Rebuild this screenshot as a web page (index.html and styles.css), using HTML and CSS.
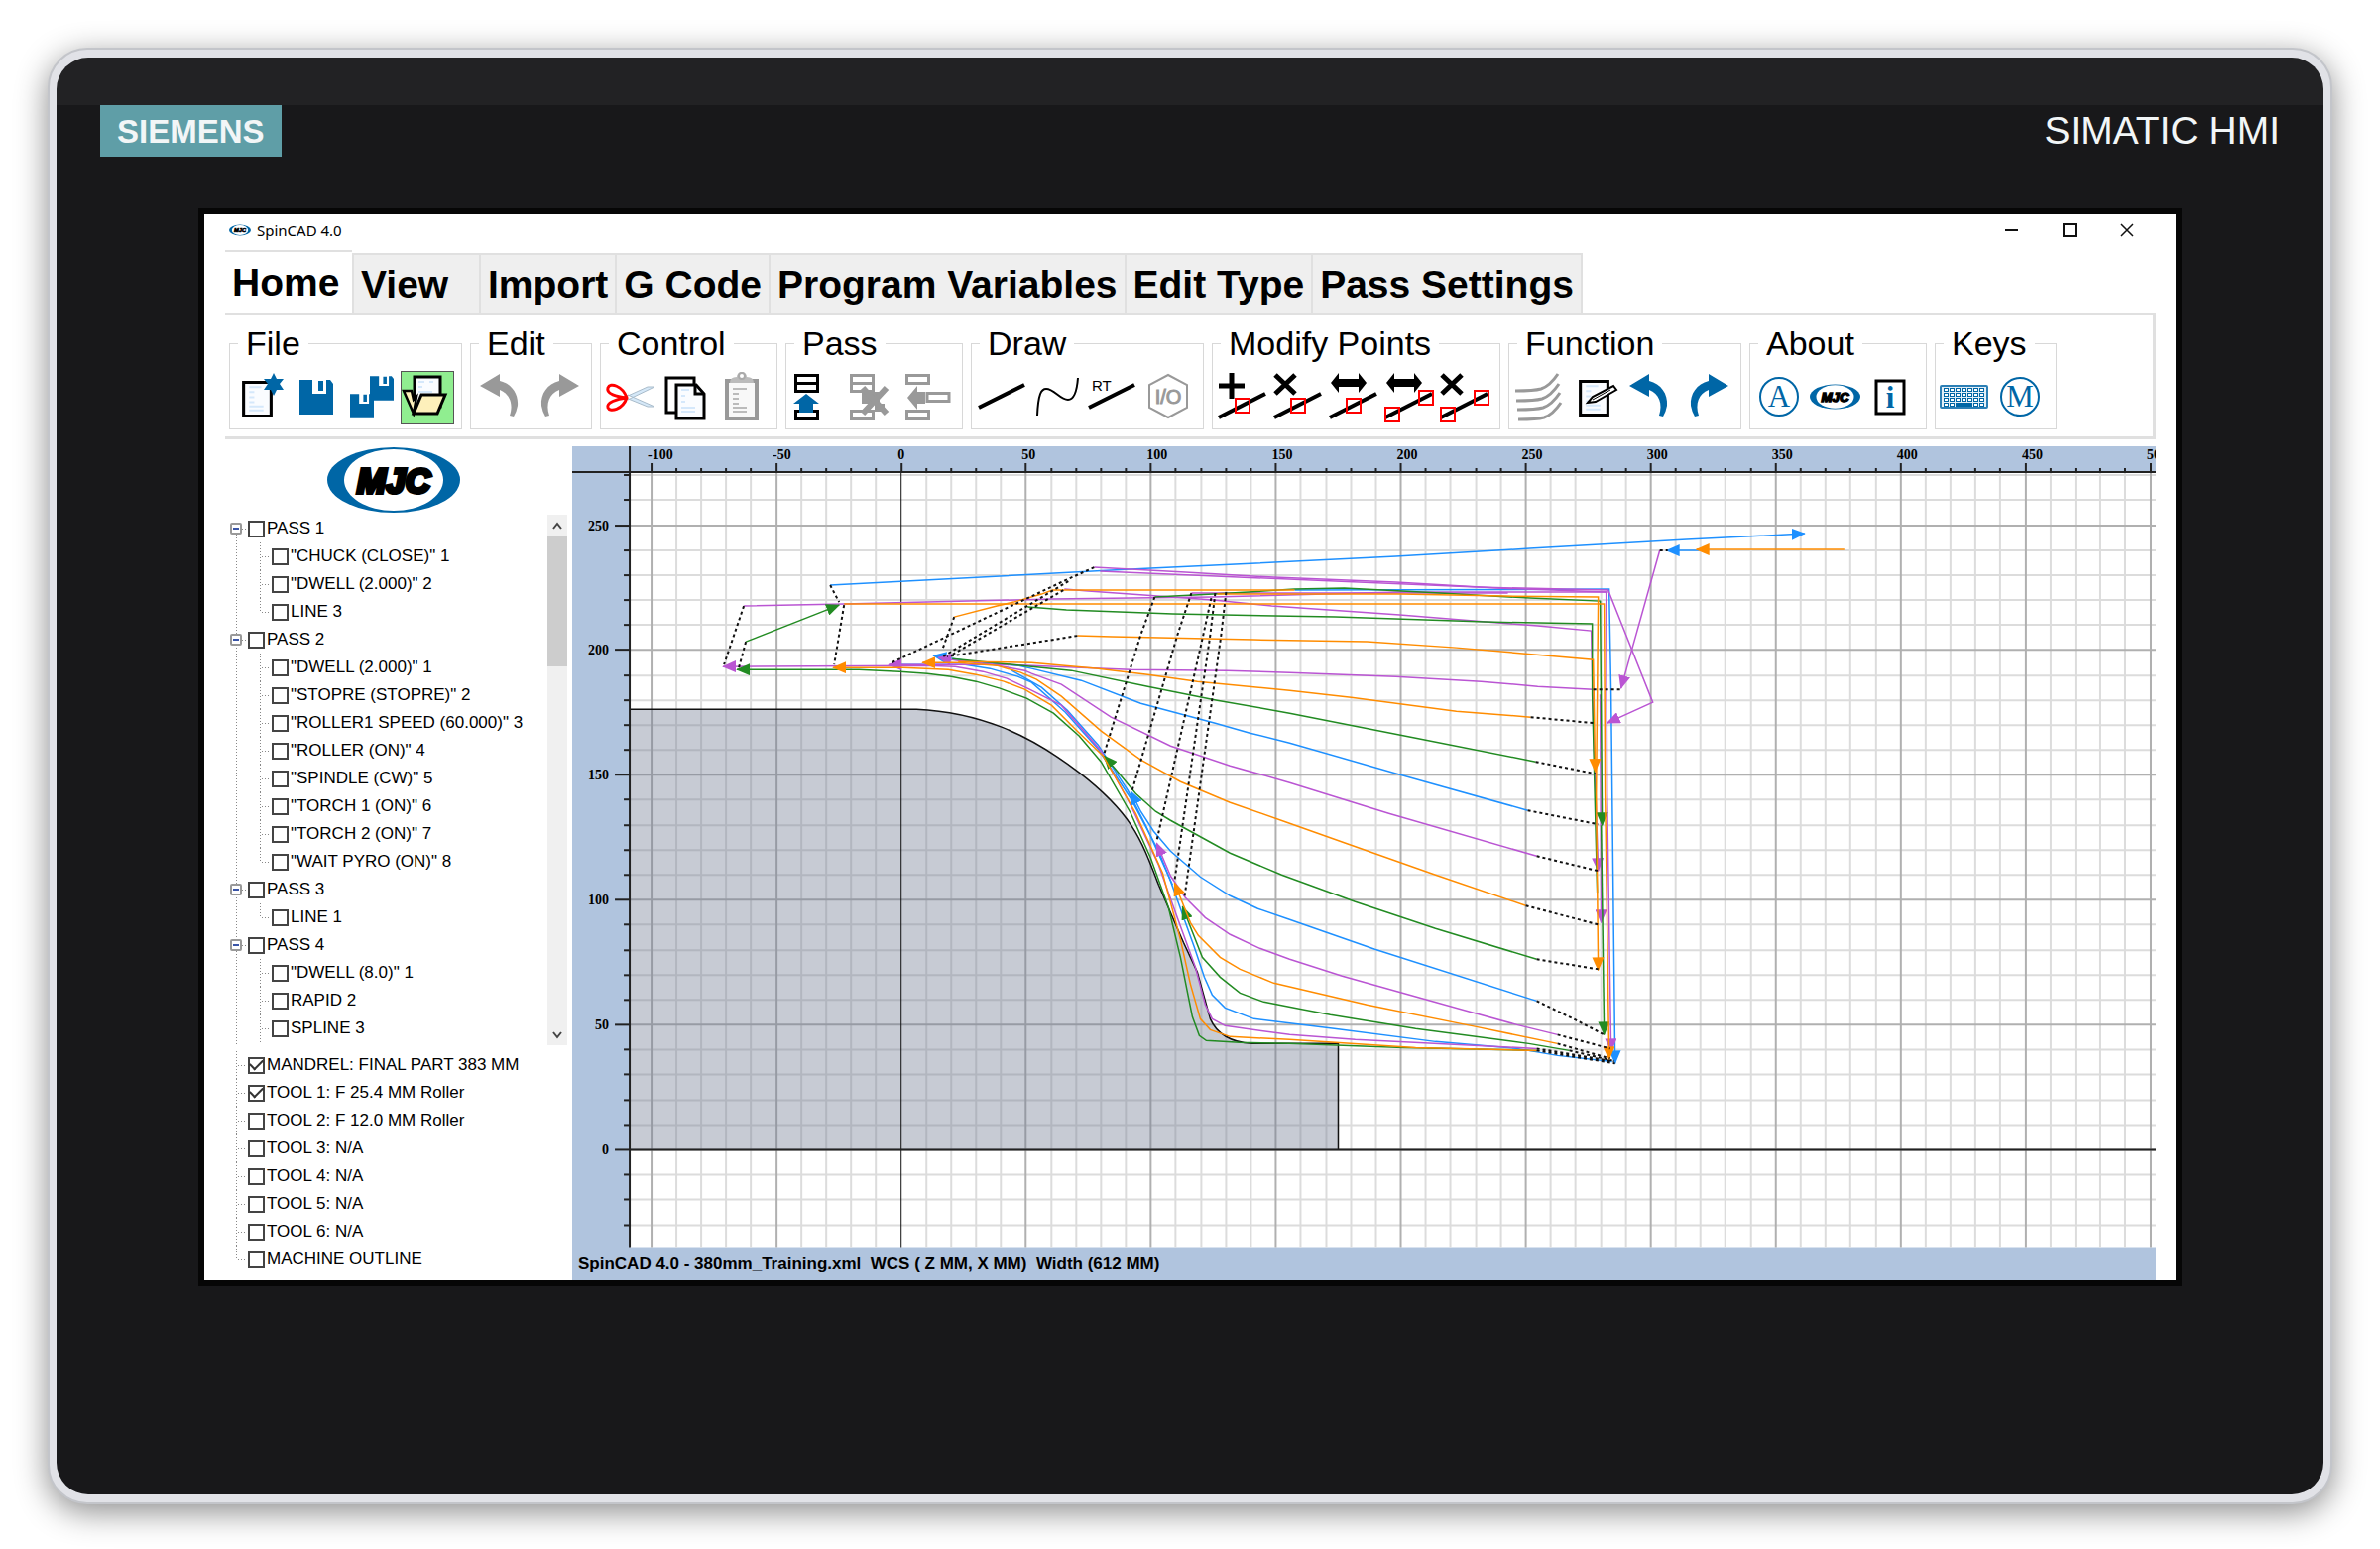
FILE: index.html
```html
<!DOCTYPE html>
<html lang="en">
<head>
<meta charset="utf-8">
<title>SpinCAD 4.0</title>
<link rel="stylesheet" href="styles.css">
</head>
<body>
<svg class="defs" aria-hidden="true">
  <symbol id="mjc" viewBox="0 0 134 66">
    <ellipse cx="67" cy="33" rx="67" ry="33" fill="#0066a6"/>
    <ellipse cx="67" cy="33" rx="50" ry="31" fill="#fff"/>
    <text x="67" y="46" class="mjc-text">MJC</text>
  </symbol>
  <symbol id="undo" viewBox="0 0 52 52">
    <path fill="currentColor" d="M4 14 24 2v7C36 12 43 22 42 34q-1 6-4 11l-4-1c4-12 0-22-10-26v7z"/>
  </symbol>
  <symbol id="page" viewBox="0 0 30 36">
    <path d="M1.500 1.500h27v33h-27z" fill="#fafcff" stroke="#000" stroke-width="3"/>
    <path d="M7 6h12M7 11h5M7 16h5M7 21h5M7 25h14M7 29h14" stroke="#d5e8fb" stroke-width="2"/>
  </symbol>
  <symbol id="floppy" viewBox="0 0 34 35">
    <path fill="#0066a6" d="M0 0h13v14h14V0h4l3 4v31H0zM19 1h5v10h-5z"/>
  </symbol>
  <symbol id="segment" viewBox="0 0 52 52">
    <path d="M1 46 48 22" stroke="#000" stroke-width="4"/>
  </symbol>
</svg>

<div class="device">
  <div class="panel">
    <header class="brand">
      <span class="badge">SIEMENS</span>
      <span class="model">SIMATIC HMI</span>
    </header>

    <main class="screen">
      <div class="titlebar">
        <svg class="app-icon"><use href="#mjc"/></svg>
        <h1 class="app-name">SpinCAD 4.0</h1>
        <button class="win" aria-label="Minimize"><svg width="14" height="14"><path d="M0 7h13" stroke="#111" stroke-width="2"/></svg></button>
        <button class="win" aria-label="Maximize"><svg width="14" height="14"><path d="M1 1h12v12H1z" fill="none" stroke="#111" stroke-width="2"/></svg></button>
        <button class="win" aria-label="Close"><svg width="14" height="14"><path d="m1 1 12 12M13 1 1 13" stroke="#111" stroke-width="1.500"/></svg></button>
      </div>

      <nav class="tabs">
        <button class="tab tab-active">Home</button>
        <button class="tab">View</button>
        <button class="tab">Import</button>
        <button class="tab">G Code</button>
        <button class="tab">Program Variables</button>
        <button class="tab">Edit Type</button>
        <button class="tab">Pass Settings</button>
      </nav>

      <section class="ribbon">
        <fieldset class="group"><legend>File</legend>
          <button class="tool" aria-label="New"><svg><use href="#page" x="7" y="9" width="31" height="37"/><path fill="#0066a6" d="m39 1 3 6h7l-4 5 4 6h-7l-3 6-3-6h-7l4-6-4-5h7z"/></svg></button>
          <button class="tool" aria-label="Save"><svg><use href="#floppy" x="9" y="8" width="34" height="35"/></svg></button>
          <button class="tool" aria-label="Save all"><svg><use href="#floppy" x="24" y="4" width="24" height="25"/><use href="#floppy" x="4" y="22" width="24" height="25"/></svg></button>
          <button class="tool tool-on" aria-label="Open"><svg><path d="M13 5h26v30H13z" fill="#fafcff" stroke="#000" stroke-width="3"/><path d="M17 10h6m5 0h4M17 15h4M17 20h14" stroke="#d5e8fb" stroke-width="2"/><path d="M2 19h8l2 9 3-3-3 17z" fill="#fdf0bb" stroke="#000" stroke-width="2.500"/><path d="M20 23h24l-8 19H12z" fill="#fdf0bb" stroke="#000" stroke-width="3"/></svg></button>
        </fieldset>
        <fieldset class="group"><legend>Edit</legend>
          <button class="tool tool-off" aria-label="Undo"><svg><use href="#undo"/></svg></button>
          <button class="tool tool-off" aria-label="Redo"><svg><use href="#undo" transform="matrix(-1 0 0 1 52 0)"/></svg></button>
        </fieldset>
        <fieldset class="group"><legend>Control</legend>
          <button class="tool" aria-label="Cut"><svg><path d="m20 25 22-10h7L22 28zM20 26l22 9h7L22 23z" fill="#d5e8f8" stroke="#a9bccb"/><path d="M21 26C17 14 4 10 2 16s9 9 19 10C11 27 0 31 2 36s15 2 19-10z" fill="none" stroke="#f00" stroke-width="3"/></svg></button>
          <button class="tool" aria-label="Copy"><svg><path d="M5 6h28v35H5z" fill="#fff" stroke="#000" stroke-width="3"/><path d="M15 13h20l8 9v25H15z" fill="#fafcff" stroke="#000" stroke-width="3"/><path d="M34 13v9h9" fill="none" stroke="#000" stroke-width="3"/><path d="M20 18h8M20 24h4M20 30h4M20 36h14M20 40h14" stroke="#d5e8fb" stroke-width="2"/></svg></button>
          <button class="tool" aria-label="Paste"><svg><path d="M10 9h30v38H10z" fill="#f8f8f8" stroke="#999" stroke-width="4"/><path d="M13 11q0-6 7-6a5 5 0 0 1 10 0q7 0 7 6z" fill="#bbb"/><circle cx="25" cy="4" r="3" fill="#fff" stroke="#aaa" stroke-width="2"/><path d="M16 17h14M16 22h6M16 27h6M16 32h6M16 36h14M16 40h14" stroke="#bbb" stroke-width="2"/></svg></button>
        </fieldset>
        <fieldset class="group"><legend>Pass</legend>
          <button class="tool" aria-label="Move pass up"><svg><path d="M4.500 3.500h22v8h-22zm0 8h22v8h-22zm0 28h22v8h-22z" fill="#fff" stroke="#000" stroke-width="3"/><path d="M15 22 28 32h-6v9H8v-9H2z" fill="#0066a6"/></svg></button>
          <button class="tool" aria-label="Delete pass"><svg><path d="M4.500 3.500h22v8h-22zm0 8h22v8h-22zm0 28h22v8h-22z" fill="#fff" stroke="#999" stroke-width="3"/><path d="M15 20h18v12h5v8H28v-8H15z" fill="#999"/><path d="m16 16 24 26m0-26L16 42" stroke="#999" stroke-width="6"/></svg></button>
          <button class="tool" aria-label="Insert pass"><svg><path d="M4.500 3.500h22v8h-22zm0 36h22v8h-22zM25 21.500h22v8H25z" fill="#fff" stroke="#999" stroke-width="3"/><path d="m5 26 10-12v6h8v12h-8v6z" fill="#999"/></svg></button>
        </fieldset>
        <fieldset class="group"><legend>Draw</legend>
          <button class="tool" aria-label="Line"><svg><path d="m2 36 46-23" stroke="#000" stroke-width="4"/></svg></button>
          <button class="tool" aria-label="Spline"><svg><path d="M5 44C6 22 9 17 14 17c8 0 14 11 22 11 6 0 9-9 10-22" fill="none" stroke="#000" stroke-width="2"/></svg></button>
          <button class="tool" aria-label="Rapid"><svg><path d="m1 36 46-23" stroke="#000" stroke-width="4"/><text x="4" y="19" class="rt">RT</text></svg></button>
          <button class="tool" aria-label="Input output"><svg><path d="m25 3 19 10v23L25 46 6 36V13z" fill="none" stroke="#999" stroke-width="2"/><text x="25" y="32" class="io">I/O</text></svg></button>
        </fieldset>
        <fieldset class="group"><legend>Modify Points</legend>
          <button class="tool" aria-label="Add point"><svg><use href="#segment"/><path d="M14 1v26M1 14h26" stroke="#000" stroke-width="5"/><path d="M18 27h14v14H18z" class="handle"/></svg></button>
          <button class="tool" aria-label="Delete point"><svg><use href="#segment"/><path d="m2 3 20 19M22 3 2 22" stroke="#000" stroke-width="5"/><path d="M18 27h14v14H18z" class="handle"/></svg></button>
          <button class="tool" aria-label="Move point"><svg><use href="#segment"/><path d="m2 11 8-10v6h20V1l8 10-8 10v-6H10v6z"/><path d="M18 27h14v14H18z" class="handle"/></svg></button>
          <button class="tool" aria-label="Move points"><svg><use href="#segment"/><path d="m2 11 8-10v6h20V1l8 10-8 10v-6H10v6z"/><path d="M1 36h14v14H1zM35 19h14v14H35z" class="handle"/></svg></button>
          <button class="tool" aria-label="Delete points"><svg><use href="#segment"/><path d="m2 3 20 19M22 3 2 22" stroke="#000" stroke-width="5"/><path d="M1 36h14v14H1zM35 19h14v14H35z" class="handle"/></svg></button>
        </fieldset>
        <fieldset class="group"><legend>Function</legend>
          <button class="tool" aria-label="Offset passes"><svg><path d="M1 19Q20 19 27 17 36 14 44 2M2 29Q21 29 28 27 37 24 45 12M3 38Q22 38 29 36 38 33 46 21M4 48Q23 48 30 46 39 43 47 31" fill="none" stroke="#999" stroke-width="3"/></svg></button>
          <button class="tool" aria-label="Edit note"><svg><use href="#page" x="9" y="8" width="31" height="37"/><path d="m18 31 5-6 21-11 3 4-21 12z" fill="#fff" stroke="#000" stroke-width="2"/><path d="m23 28 18-10" stroke="#000"/></svg></button>
          <button class="tool tool-blue" aria-label="Step back"><svg><use href="#undo"/></svg></button>
          <button class="tool tool-blue" aria-label="Step forward"><svg><use href="#undo" transform="matrix(-1 0 0 1 52 0)"/></svg></button>
        </fieldset>
        <fieldset class="group"><legend>About</legend>
          <button class="tool" aria-label="About"><svg><circle cx="24" cy="25" r="19" class="ring"/><text x="24" y="35" class="glyph">A</text></svg></button>
          <button class="tool" aria-label="MJC"><svg><use href="#mjc" x="-1" y="12" width="51" height="26"/></svg></button>
          <button class="tool" aria-label="Information"><svg><path d="M10 9h28v33H10z" fill="#fff" stroke="#000" stroke-width="3"/><text x="24" y="36" class="glyph glyph-bold">i</text></svg></button>
        </fieldset>
        <fieldset class="group"><legend>Keys</legend>
          <button class="tool" aria-label="Keyboard"><svg><rect x="0" y="14" width="47" height="22" rx="1" fill="#e4eff7" stroke="#2c7fb5" stroke-width="2"/><path d="M3 18h41M3 23h41M3 28h41M3 33h41" stroke="#0066a6" stroke-width="4" stroke-dasharray="5 1"/><path d="M4 18h40M4 23h40M4 28h40M4 33h40" stroke="#fff" stroke-width="2" stroke-dasharray="3 3"/><path d="M15 31h17v4H15z" fill="#0066a6"/></svg></button>
          <button class="tool" aria-label="Manual"><svg><circle cx="24" cy="25" r="19" class="ring"/><text x="24" y="35" class="glyph">M</text></svg></button>
        </fieldset>
      </section>

      <div class="work">
        <aside class="side">
          <svg class="logo"><use href="#mjc"/></svg>
          <div class="tree-wrap">
            <ul class="tree">
              <li><div class="node"><button class="fold" aria-label="Collapse"></button><label><input type="checkbox">PASS 1</label></div>
                <ul class="leaves">
                  <li><label><input type="checkbox">"CHUCK (CLOSE)" 1</label></li>
                  <li><label><input type="checkbox">"DWELL (2.000)" 2</label></li>
                  <li><label><input type="checkbox">LINE 3</label></li>
                </ul></li>
              <li><div class="node"><button class="fold" aria-label="Collapse"></button><label><input type="checkbox">PASS 2</label></div>
                <ul class="leaves">
                  <li><label><input type="checkbox">"DWELL (2.000)" 1</label></li>
                  <li><label><input type="checkbox">"STOPRE (STOPRE)" 2</label></li>
                  <li><label><input type="checkbox">"ROLLER1 SPEED (60.000)" 3</label></li>
                  <li><label><input type="checkbox">"ROLLER (ON)" 4</label></li>
                  <li><label><input type="checkbox">"SPINDLE (CW)" 5</label></li>
                  <li><label><input type="checkbox">"TORCH 1 (ON)" 6</label></li>
                  <li><label><input type="checkbox">"TORCH 2 (ON)" 7</label></li>
                  <li><label><input type="checkbox">"WAIT PYRO (ON)" 8</label></li>
                </ul></li>
              <li><div class="node"><button class="fold" aria-label="Collapse"></button><label><input type="checkbox">PASS 3</label></div>
                <ul class="leaves">
                  <li><label><input type="checkbox">LINE 1</label></li>
                </ul></li>
              <li><div class="node"><button class="fold" aria-label="Collapse"></button><label><input type="checkbox">PASS 4</label></div>
                <ul class="leaves leaves-open">
                  <li><label><input type="checkbox">"DWELL (8.0)" 1</label></li>
                  <li><label><input type="checkbox">RAPID 2</label></li>
                  <li><label><input type="checkbox">SPLINE 3</label></li>
                </ul></li>
            </ul>
            <div class="scroll">
              <button class="scroll-btn" aria-label="Scroll up"><svg width="12" height="10"><path d="m2 8 4-5 4 5" fill="none" stroke="#444" stroke-width="2"/></svg></button>
              <div class="thumb"></div>
              <button class="scroll-btn" aria-label="Scroll down"><svg width="12" height="10"><path d="m2 2 4 5 4-5" fill="none" stroke="#444" stroke-width="2"/></svg></button>
            </div>
          </div>
          <ul class="leaves parts">
            <li><label><input type="checkbox" checked>MANDREL: FINAL PART 383 MM</label></li>
            <li><label><input type="checkbox" checked>TOOL 1: F 25.4 MM Roller</label></li>
            <li><label><input type="checkbox">TOOL 2: F 12.0 MM Roller</label></li>
            <li><label><input type="checkbox">TOOL 3: N/A</label></li>
            <li><label><input type="checkbox">TOOL 4: N/A</label></li>
            <li><label><input type="checkbox">TOOL 5: N/A</label></li>
            <li><label><input type="checkbox">TOOL 6: N/A</label></li>
            <li><label><input type="checkbox">MACHINE OUTLINE</label></li>
          </ul>
        </aside>

        <section class="view">
          <svg class="plot" viewBox="577 450 1596 807" role="img" aria-label="Tool paths">
            <defs>
              <marker id="end-b" class="head"><path class="fb" d="M0 0 14 6 0 12z"/></marker>
              <marker id="end-p" class="head"><path class="fp" d="M0 0 14 6 0 12z"/></marker>
              <marker id="end-o" class="head"><path class="fo" d="M0 0 14 6 0 12z"/></marker>
              <marker id="end-g" class="head"><path class="fg" d="M0 0 14 6 0 12z"/></marker>
            </defs>
            <rect x="635" y="476" width="1538" height="781" fill="#fff"/>
            <g id="grid"></g>
            <path class="mandrel" d="M635 715H924C985 718 1035 738 1088 779S1150 845 1168 892L1183 927 1193 950 1207 980 1220 1027Q1230 1050 1262 1052H1349V1159H635z"/>
            <path class="outline" d="M635 715H924C985 718 1035 738 1088 779S1150 845 1168 892L1183 927 1193 950 1207 980 1220 1027Q1230 1050 1262 1052H1349V1159"/>
            <g id="axes"></g>

            <g class="b">
              <path d="M837 590 1120 575 1160 573 1407 561 1542 553 1700 544 1819 538" marker-end="url(#end-b)"/>
              <path d="M1713 555H1680" marker-end="url(#end-b)"/>
              <path d="M1305 595 1622 594 1624 700 1628 1072" marker-end="url(#end-b)"/>
              <path d="M1540 817 1415 782 1300 749 1260 739 1225 729 1150 709 1090 686 1040 674 1026 671 980 667 941 661" marker-end="url(#end-b)"/>
              <path d="M1549 1009 1386 957 1300 927 1268 916 1240 903 1210 884 1180 858 1163 838 1150 818 1140 798" marker-end="url(#end-b)"/>
              <path d="M1625 1070 1570 1064 1529 1057 1447 1050 1345 1037 1264 1027 1235 1016 1222 1003 1214 985 1204 955 1195 930 1180 888 1168 858 1140 805 1107 755 1074 718 1040 688 1026 682 998 674 973 670H897"/>
              <path d="M1182 892 1155 832 1137 797 1107 751 1076 716 1050 693 1020 676"/>
            </g>
            <g class="p">
              <path d="M750 611 851 609 977 606 1060 604 1223 602 1411 597H1621"/>
              <path d="M1073 594 1097 596 1223 605 1282 611 1411 620 1550 631 1604 636 1606 730 1611 878" marker-end="url(#end-p)"/>
              <path d="M1103 572 1195 577 1284 582 1407 587 1509 593 1619 597 1620 800 1624 1060" marker-end="url(#end-p)"/>
              <path d="M1109 576 1346 586 1489 592 1621 595 1666 708 1620 729" marker-end="url(#end-p)"/>
              <path d="M1673 555 1634 694" marker-end="url(#end-p)"/>
              <path d="M1201 598H1520"/>
              <path d="M1606 695 1550 692 1493 687 1407 682 1300 678 1237 676 1140 675 1040 671 1010 670H896" marker-end="url(#end-p)"/>
              <path d="M1549 863 1400 820 1300 789 1240 772 1180 752 1120 723 1070 690 1040 679 1033 676 1000 670 966 666 946 663" marker-end="url(#end-p)"/>
              <path d="M1570 1043 1529 1033 1435 1007 1353 984 1300 967 1270 956 1240 942 1215 925 1195 905 1180 883 1166 850" marker-end="url(#end-p)"/>
              <path d="M1549 1057 1366 1048 1300 1043 1235 1034 1222 1027 1215 1013 1205 975 1185 920 1168 872 1140 812 1110 757 1070 711 1036 694 1015 684 991 677 963 672 935 671 729 672" marker-end="url(#end-p)"/>
              <path d="M1613 700 1614 930" marker-end="url(#end-p)"/>
            </g>
            <g class="g">
              <path d="M1549 1059 1415 1056 1300 1052 1250 1051 1216 1049 1209 1044 1202 1025 1190 965 1178 915 1160 865 1140 820 1110 768 1088 742 1062 719 1035 704 1008 694 984 687 959 682 935 679 907 677 866 675H743" marker-end="url(#end-g)"/>
              <path d="M752 647 846 610" marker-end="url(#end-g)"/>
              <path d="M1036 612 1075 615 1182 619 1346 622 1497 627 1605 629V700L1610 900"/>
              <path d="M1164 602 1223 599 1305 594 1355 593 1452 598 1542 603 1613 606 1615 832" marker-end="url(#end-g)"/>
              <path d="M1614 832 1617 1043" marker-end="url(#end-g)"/>
              <path d="M1548 768 1427 744 1300 719 1227 706 1157 692 1080 676 1040 672 1010 669 960 664"/>
              <path d="M1549 967 1447 936 1366 909 1292 882 1240 860 1180 827 1165 818 1145 800 1120 770 1113 762" marker-end="url(#end-g)"/>
              <path d="M1582 1059 1541 1052 1427 1037 1341 1023 1274 1010 1250 1001 1230 985 1212 965 1203 942 1192 914" marker-end="url(#end-g)"/>
            </g>
            <g class="o">
              <path d="M1859 554H1710" marker-end="url(#end-o)"/>
              <path d="M851 609H1617L1618 800 1622 1068" marker-end="url(#end-o)"/>
              <path d="M962 622 1005 611 1022 607 1050 599 1061 595H1305"/>
              <path d="M1086 641 1121 642 1264 645 1378 647 1468 653 1606 665 1608 778" marker-end="url(#end-o)"/>
              <path d="M1227 599H1411L1517 601 1611 602 1609 800 1611 978" marker-end="url(#end-o)"/>
              <path d="M1543 723 1468 717 1362 703 1300 696 1207 687 1157 680 1107 674 1040 668 966 667"/>
              <path d="M1538 913 1447 882 1362 852 1300 830 1240 809 1190 788 1150 766 1110 737 1070 702 1045 685 1029 678 1005 671 966 668H930" marker-end="url(#end-o)"/>
              <path d="M1549 1059 1427 1056 1300 1048 1240 1045 1220 1038 1210 1027 1200 992 1190 947 1172 880 1145 820 1112 762 1086 737 1060 711 1033 695 1012 687 984 680 956 675 910 673H840" marker-end="url(#end-o)"/>
              <path d="M1570 1052 1488 1035 1378 1013 1284 991 1250 977 1230 965 1208 943 1200 930 1184 890" marker-end="url(#end-o)"/>
            </g>
            <path class="rapid" d="M837 590 846 607M750 611 730 670M752 647 745 673M851 610 841 670M962 622 950 655M1086 641 955 662M1103 572 1072 586 897 669M1077 586 949 663M1072 595 960 660M1164 602 1150 640 1113 760M1201 598 1187 640 1141 798M1221 603 1213 640 1166 848M1225 598 1220 640 1184 888M1236 597 1231 640 1194 905M1606 695H1634M1543 723 1607 729M1548 768 1608 780M1540 817 1611 831M1549 863 1611 878M1538 913 1611 932M1549 967 1611 977M1549 1009 1588 1028 1617 1043M1570 1043 1623 1057M1570 1052 1623 1067M1582 1059 1625 1069M1549 1059 1628 1072M1549 1057 1627 1070M1673 555H1681"/>
          </svg>
          <p class="status">SpinCAD 4.0 - 380mm_Training.xml&nbsp; WCS ( Z MM, X MM)&nbsp; Width (612 MM)</p>
        </section>
      </div>
    </main>
  </div>
</div>
<script src="plot.js"></script>
</body>
</html>
```
FILE: styles.css
```css
* { box-sizing: border-box; margin: 0; padding: 0; }
body {
  padding: 48px;
  background: #fff;
  color: #000;
  font-family: "Liberation Sans", Arial, sans-serif;
}
button { border: 0; background: none; font: inherit; color: inherit; }
ul { list-style: none; }
.defs { position: absolute; width: 0; height: 0; }

.device {
  padding: 8px 7px;
  border: 2px solid #c3c5ca;
  border-radius: 40px;
  background: #e1e2e7;
  box-shadow: 0 8px 32px rgba(0, 0, 0, .45);
}
.panel {
  padding: 48px 0 210px;
  border-radius: 32px;
  background: linear-gradient(#222224 48px, #18181a 48px);
}
.brand {
  display: flex;
  justify-content: space-between;
  align-items: center;
  padding: 0 44px;
  color: #f2f6f7;
}
.badge {
  padding: 2px 17px 0;
  background: #5f9ea7;
  font-size: 33px;
  font-weight: bold;
  line-height: 50px;
}
.model { font-size: 39px; line-height: 52px; }

.screen {
  margin: 52px 143px 0;
  padding: 0 20px 0 21px;
  border: solid #060606;
  border-width: 6px;
  background: #fff;
}
.titlebar { display: flex; align-items: center; height: 36px; padding: 0 0 4px 4px; }
.app-icon { width: 22px; height: 12px; }
.app-name { margin: 0 auto 0 6px; font: 15px "Noto Sans", sans-serif; }
.win { display: flex; align-items: center; justify-content: center; width: 58px; height: 32px; }

.tabs { display: flex; align-items: flex-end; height: 64px; }
.tab {
  min-width: 128px;
  height: 61px;
  padding: 0 7px;
  border: solid #e0e0e0;
  border-width: 2px 0 0 2px;
  background: #efefef;
  font-size: 39px;
  font-weight: bold;
  line-height: 58px;
  text-align: left;
  white-space: nowrap;
}
.tab-active { height: 64px; border-left: 0; background: #fff; }
.tab:last-child { border-right-width: 2px; }

.ribbon {
  display: flex;
  gap: 8px;
  height: 127px;
  padding: 5px 4px;
  border: solid #e0e0e0;
  border-width: 2px 3px 3px 0;
}
.group {
  display: flex;
  gap: 4px;
  height: 110px;
  padding: 6px 8px 0 5px;
  border: 1px solid #d8d8d8;
}
.group legend {
  margin-left: 3px;
  padding: 0 8px;
  font-size: 34px;
  line-height: 46px;
}
.tool { width: 52px; height: 52px; }
.tool svg { display: block; width: 100%; height: 100%; overflow: visible; }
.tool-on { background: #90ee90; outline: 1px solid #555; }
.tool-off { color: #999; }
.tool-blue { color: #0066a6; }
.handle { fill: none; stroke: #f00; stroke-width: 2; }
.ring { fill: none; stroke: #0066a6; stroke-width: 2; }
.rt { font-size: 15px; }
.io { font-size: 20px; fill: #999; stroke: #999; text-anchor: middle; }
.glyph { font: 31px "Liberation Serif", serif; fill: #0066a6; text-anchor: middle; }
.glyph-bold { font-weight: bold; }
.mjc-text {
  font: italic bold 35px "Liberation Sans", sans-serif;
  stroke: #000;
  stroke-width: 4;
  text-anchor: middle;
}

.work { display: flex; padding-top: 7px; }
.side { flex: none; width: 350px; padding-right: 5px; }
.logo { display: block; width: 134px; height: 66px; margin: 1px 0 2px 103px; }
.tree-wrap { display: flex; justify-content: space-between; height: 535px; }
.tree {
  background: repeating-linear-gradient(#888 0 1px, #fff 1px 3px) 11px 14px / 1px 100% no-repeat;
}
.node { display: flex; align-items: center; height: 28px; padding-left: 5px; }
.node label { background: repeating-linear-gradient(90deg, #888 0 1px, transparent 1px 3px) 0 14px / 6px 1px no-repeat; padding-left: 6px; }
label { display: flex; align-items: center; gap: 2px; font-size: 17px; line-height: 28px; white-space: nowrap; }
input {
  display: grid;
  place-items: center;
  appearance: none;
  width: 17px;
  height: 17px;
  border: 2px solid #444;
  background: #fff;
}
input:checked::before {
  content: "";
  width: 11px;
  height: 6px;
  border: solid #333;
  border-width: 0 0 2px 2px;
  transform: translateY(-2px) rotate(-45deg);
}
.fold {
  width: 12px;
  height: 12px;
  border: 2px solid #999;
  border-radius: 2px;
  background: linear-gradient(#3a55a8, #3a55a8) center / 6px 2px no-repeat #fff;
}
.leaves { padding-left: 35px; }
.leaves li {
  padding-left: 12px;
  background:
    repeating-linear-gradient(#888 0 1px, transparent 1px 3px) 0 0 / 1px 100% no-repeat,
    repeating-linear-gradient(90deg, #888 0 1px, transparent 1px 3px) 2px 14px / 9px 1px no-repeat;
}
.leaves li:last-child { background-size: 1px 15px, 9px 1px; }
.leaves-open li:last-child { background-size: 1px 100%, 9px 1px; }
.parts { padding: 6px 0 0 11px; }
.scroll { display: flex; flex-direction: column; width: 20px; background: #f0f0f0; }
.scroll-btn { height: 21px; }
.thumb { height: 132px; margin-bottom: auto; background: #cdcdcd; }

.view { flex: 1; min-width: 0; background: #b0c4de; }
.plot { display: block; width: 100%; }
.status { padding-left: 6px; font-size: 17px; font-weight: bold; line-height: 33px; white-space: nowrap; }

.mandrel { fill: rgba(115, 125, 148, .4); }
.outline { fill: none; stroke: #111; stroke-width: 1.5; }
.g, .o, .b, .p { fill: none; stroke-width: 1.5; }
.g { stroke: #228b22; }
.o { stroke: #ff8c00; }
.b { stroke: #1e90ff; }
.p { stroke: #ba55d3; }
.fg { fill: #228b22; }
.fo { fill: #ff8c00; }
.fb { fill: #1e90ff; }
.fp { fill: #ba55d3; }
.head path { stroke: none; }
.rapid { fill: none; stroke: #111; stroke-width: 2; stroke-dasharray: 3 3; }
.minor { stroke: #dcdcdc; stroke-width: 2; }
.major { stroke: #b0b0b0; stroke-width: 2; }
.axis { stroke: #222; stroke-width: 2; }
.zero { stroke: #111; stroke-width: 1; }
.num { font: bold 14px "Liberation Serif", serif; }
.num-y { text-anchor: end; }
```
FILE: plot.js
```js
// Rulers and grid: one line every 10 mm, a labelled one every 50 mm.
const NS = 'http://www.w3.org/2000/svg';
const grid = document.getElementById('grid');
const axes = document.getElementById('axes');
const ORIGIN_X = 908.5, ORIGIN_Y = 1159, SCALE = 2.518;
const LEFT = 635, TOP = 476, RIGHT = 2173, BOTTOM = 1257;

function line(parent, x1, y1, x2, y2, cls) {
  const el = document.createElementNS(NS, 'line');
  Object.entries({ x1, y1, x2, y2, class: cls }).forEach(([k, v]) => el.setAttribute(k, v));
  parent.append(el);
}
function label(x, y, text, cls) {
  const el = document.createElementNS(NS, 'text');
  Object.entries({ x, y, class: cls }).forEach(([k, v]) => el.setAttribute(k, v));
  el.textContent = text;
  axes.append(el);
}
for (const major of [false, true]) {
  for (let mm = -100; mm <= 500; mm += 10) {
    if ((mm % 50 === 0) !== major) continue;
    const x = Math.round(ORIGIN_X + mm * SCALE);
    if (mm) line(grid, x, TOP, x, BOTTOM, major ? 'major' : 'minor');
    line(axes, x, TOP - (major ? 9 : 4), x, TOP, 'axis');
    if (major) label(x - 4, 463, mm, 'num');
  }
  for (let mm = -30; mm <= 270; mm += 10) {
    if ((mm % 50 === 0) !== major) continue;
    const y = Math.round(ORIGIN_Y - mm * SCALE);
    line(grid, LEFT, y, RIGHT, y, major ? 'major' : 'minor');
    line(axes, LEFT - (major ? 15 : 6), y, LEFT, y, 'axis');
    if (major) label(LEFT - 21, y + 5, mm, 'num num-y');
  }
}
line(axes, ORIGIN_X, TOP, ORIGIN_X, BOTTOM, 'zero');
line(axes, LEFT, ORIGIN_Y, RIGHT, ORIGIN_Y, 'axis');
line(axes, 577, TOP, RIGHT, TOP, 'axis');
line(axes, LEFT, 450, LEFT, BOTTOM, 'axis');

document.querySelectorAll('.head').forEach(m => {
  Object.entries({
    viewBox: '0 0 14 12', markerWidth: 14, markerHeight: 12,
    markerUnits: 'userSpaceOnUse', refX: 13, refY: 6, orient: 'auto'
  }).forEach(([k, v]) => m.setAttribute(k, v));
});
```
